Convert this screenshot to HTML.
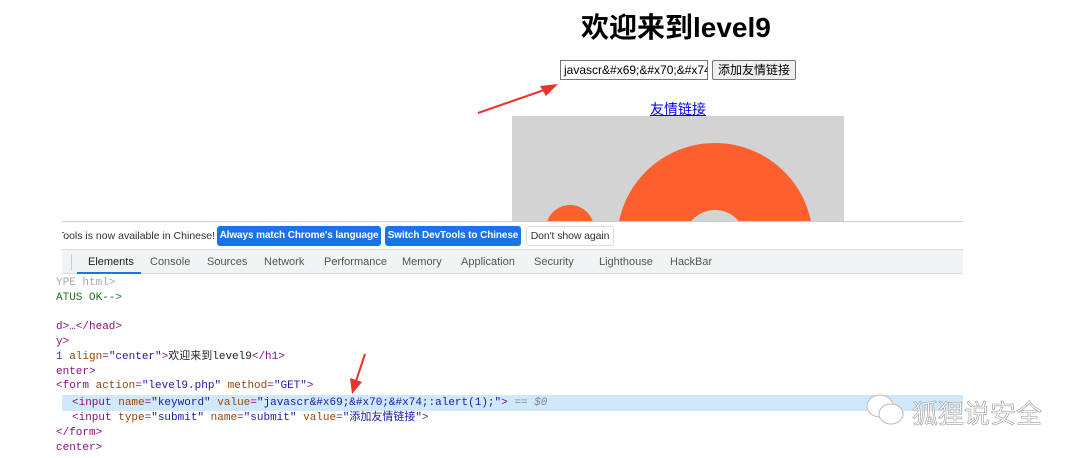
<!DOCTYPE html>
<html><head><meta charset="utf-8"><style>
*{margin:0;padding:0;box-sizing:border-box}
body{width:1080px;height:458px;background:#fff;position:relative;overflow:hidden;font-family:"Liberation Sans","Noto Sans CJK SC",sans-serif}
.a{position:absolute;white-space:nowrap}
h1{position:absolute;left:581px;top:6px;font-size:28px;font-weight:bold;color:#000;font-family:"Liberation Sans","Noto Sans CJK SC",sans-serif}
.inp{left:560px;top:60px;width:148px;height:20px;border:1px solid #767676;font-size:12px;padding:2px 3px;color:#000;overflow:hidden}
.btn{left:712px;top:60px;width:84px;height:20px;border:1px solid #767676;background:#efefef;font-size:12px;text-align:center;line-height:18px;border-radius:2px}
.link{left:650px;top:99px;font-size:14px;color:#00e;text-decoration:underline}
.dv{left:62px;top:221px;width:901px;height:237px;border-top:1px solid #ccc;background:#fff}
.info{left:62px;top:222px;width:901px;height:27px;background:#fff;font-size:11px;color:#333;overflow:hidden}
.b{position:absolute;top:4px;height:20px;border-radius:3px;font-size:10px;line-height:12px;padding-top:4px;color:#fff;background:#1a73e8;font-weight:bold;text-align:center;overflow:hidden;letter-spacing:-0.1px}
.tabs{left:62px;top:249px;width:901px;height:25px;background:#f1f3f4;border-top:1px solid #ddd;border-bottom:1px solid #ddd;font-size:11px;color:#555}
.tabs span{position:absolute;top:6px}
.code{font-family:"Liberation Mono","Noto Sans CJK SC",monospace;font-size:11px;line-height:14px;height:14px;left:56px;color:#881280}
.n{color:#994500}.v{color:#1a1aa6}.t{color:#881280}.k{color:#222}
</style></head><body>
<h1>欢迎来到level9</h1>
<div class="a inp">javascr&amp;#x69;&amp;#x70;&amp;#x74;:alert(1);</div>
<div class="a btn">添加友情链接</div>
<div class="a link">友情链接</div>
<div class="a" style="left:512px;top:116px;width:332px;height:106px;background:#d3d3d3;overflow:hidden">
<div class="a" style="left:105px;top:27px;width:196px;height:196px;border-radius:50%;background:#fe5f2f"></div>
<div class="a" style="left:172px;top:94px;width:62px;height:62px;border-radius:50%;background:#d3d3d3"></div>
<div class="a" style="left:34px;top:89px;width:48px;height:48px;border-radius:50%;background:#fe5f2f"></div>
</div>
<svg class="a" style="left:470px;top:78px" width="95" height="40"><line x1="8" y1="35" x2="80" y2="10" stroke="#f0302a" stroke-width="2"/><polygon points="88,6 70,8 76,18" fill="#f0302a"/></svg>
<div class="a dv"></div>
<div class="a info"><span class="a" style="left:-4px;top:8px;font-size:10.5px">Tools is now available in Chinese!</span>
<span class="b" style="left:155px;width:164px">Always match Chrome's language</span>
<span class="b" style="left:323px;width:136px">Switch DevTools to Chinese</span>
<span class="b" style="left:464px;width:88px;background:#fff;color:#333;border:1px solid #ddd;font-weight:normal;padding-top:3px;font-size:10.5px">Don't show again</span></div>
<div class="a tabs"><div class="a" style="left:9px;top:4px;width:1px;height:16px;background:#ccc"></div>
<span style="left:26px;color:#222">Elements</span><div class="a" style="left:15px;top:22px;width:64px;height:2px;background:#1a73e8"></div>
<span style="left:88px">Console</span><span style="left:145px">Sources</span><span style="left:202px">Network</span><span style="left:262px">Performance</span><span style="left:340px">Memory</span><span style="left:399px">Application</span><span style="left:472px">Security</span><span style="left:537px">Lighthouse</span><span style="left:608px">HackBar</span></div>
<div class="a code" style="top:276px;color:#aaa">YPE html&gt;</div>
<div class="a code" style="top:291px;color:#236e25">ATUS OK--&gt;</div>
<div class="a code" style="top:320px">d&gt;…&lt;/head&gt;</div>
<div class="a code" style="top:335px">y&gt;</div>
<div class="a code" style="top:350px">1 <span class="n">align</span>=<span class="v">"center"</span>&gt;<span class="k">欢迎来到level9</span>&lt;/h1&gt;</div>
<div class="a code" style="top:365px">enter&gt;</div>
<div class="a code" style="top:379px">&lt;form <span class="n">action</span>=<span class="v">"level9.php"</span> <span class="n">method</span>=<span class="v">"GET"</span>&gt;</div>
<div class="a" style="left:62px;top:395px;width:901px;height:16px;background:#cfe8fc"></div>
<div class="a code" style="top:396px;left:72px">&lt;input <span class="n">name</span>=<span class="v">"keyword"</span> <span class="n">value</span>=<span class="v">"javascr&amp;#x69;&amp;#x70;&amp;#x74;:alert(1);"</span>&gt; <span style="color:#888">== <i>$0</i></span></div>
<div class="a code" style="top:411px;left:72px">&lt;input <span class="n">type</span>=<span class="v">"submit"</span> <span class="n">name</span>=<span class="v">"submit"</span> <span class="n">value</span>=<span class="v">"添加友情链接"</span>&gt;</div>
<div class="a code" style="top:426px">&lt;/form&gt;</div>
<div class="a code" style="top:441px">center&gt;</div>
<svg class="a" style="left:350px;top:352px" width="20" height="45"><line x1="15" y1="2" x2="5" y2="32" stroke="#f0302a" stroke-width="2"/><polygon points="2,42 0,26 12,30" fill="#f0302a"/></svg>
<svg class="a" style="left:864px;top:392px" width="44" height="36"><ellipse cx="16" cy="14" rx="13" ry="11" fill="#fff" stroke="#bbb"/><ellipse cx="27" cy="22" rx="12" ry="10" fill="#fff" stroke="#bbb"/></svg>
<div class="a" style="left:912px;top:394px;font-size:26px;color:#fff;-webkit-text-stroke:0.6px #999;font-family:'Noto Sans CJK SC',sans-serif">狐狸说安全</div>
</body></html>
